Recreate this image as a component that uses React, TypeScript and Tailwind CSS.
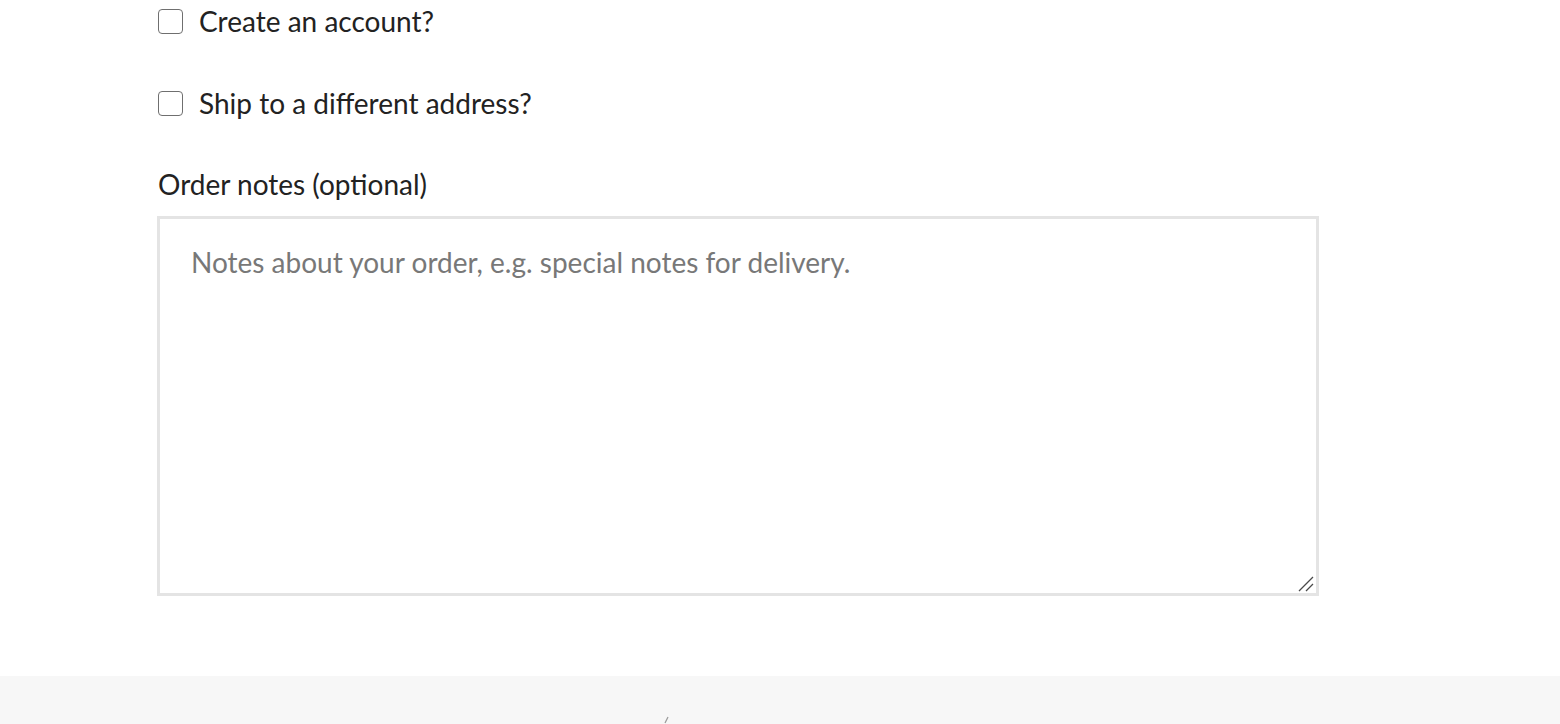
import { useState } from "react";

const CheckRow = ({ label }: { label: string }) => {
  const [checked, setChecked] = useState(false);
  return (
    <label className="flex flex-row items-center gap-[16px] cursor-pointer">
      <input
        type="checkbox"
        checked={checked}
        onChange={() => setChecked(!checked)}
        className="appearance-none m-0 ml-[1px] w-[25px] h-[25px] border-[1.5px] border-[#6f6f6f] rounded-[4px] bg-white shrink-0"
      />
      <span>{label}</span>
    </label>
  );
};

export default function App() {
  return (
    <div
      className="min-h-[724px] bg-white text-[#222222] text-[28px] leading-[42px] flex flex-col"
      style={{ fontFamily: "Lato, 'Open Sans', sans-serif" }}
    >
      <div className="pl-[157px] w-[1319px] flex flex-col">
        <CheckRow label="Create an account?" />
        <div className="mt-[40px]">
          <CheckRow label="Ship to a different address?" />
        </div>
        <div className="mt-[39px] pl-[1px]">Order notes (optional)</div>
        <div className="mt-[11px] relative w-[1162px] h-[380px]">
          <textarea
            placeholder="Notes about your order, e.g. special notes for delivery."
            className="block w-full h-full resize-none border-[3px] border-[#e4e4e4] bg-white pl-[31px] pr-[30px] pt-[22px] text-[28px] leading-[42px] text-[#222222] placeholder:text-[#787878] outline-none"
            style={{ fontFamily: "Lato, 'Open Sans', sans-serif" }}
          />
          <svg
            className="absolute right-[4px] bottom-[4px] pointer-events-none"
            width="17"
            height="17"
            viewBox="0 0 17 17"
          >
            <path d="M1 16 L15 2 M8 16 L15 9" stroke="#4a4a4a" strokeWidth="1.3" />
          </svg>
        </div>
      </div>
      <div className="mt-[80px] flex-1 h-[48px] bg-[#f7f7f7] relative">
        <svg className="absolute left-[662px] top-[40px]" width="8" height="8" viewBox="0 0 8 8">
          <path d="M6 1 L3 7" stroke="#9a9a9a" strokeWidth="1.2" />
        </svg>
      </div>
    </div>
  );
}
